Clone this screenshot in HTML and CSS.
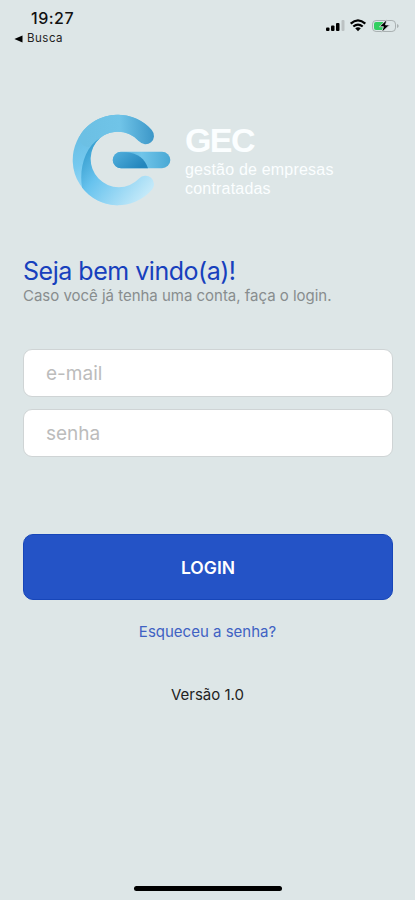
FILE: index.html
```html
<!DOCTYPE html>
<html lang="pt-BR">
<head>
<meta charset="utf-8">
<title>GEC</title>
<link rel="stylesheet" href="styles.css">
</head>
<body>
<div class="screen">
  <header class="status">
    <div class="status-left">
      <span class="clock">19:27</span>
      <span class="back"><svg width="9" height="8" viewBox="0 0 9 8"><path d="M8.500 .5v7L.4 4z"/></svg>Busca</span>
    </div>
    <svg class="status-icons" width="76" height="16" viewBox="0 0 76 16">
      <rect x="0" y="9.500" width="3.500" height="3.500" rx="1"/>
      <rect x="5" y="7.500" width="3.500" height="5.500" rx="1"/>
      <rect x="10" y="5" width="3.500" height="8" rx="1"/>
      <rect x="15.500" y="2" width="3" height="11" rx="1" fill="#bcc2c3"/>
      <g fill="none" stroke="#000" stroke-width="2.2">
        <path d="M24.700 5.600Q32-.8 39.300 5.600"/>
        <path d="M27.300 8.500Q32 4.600 36.700 8.500"/>
      </g>
      <path d="M29.200 10.200Q32 8.100 34.800 10.200L32 13.200z"/>
      <rect x="46.500" y="2.500" width="23" height="11" rx="3.600" fill="none" stroke="#a9b0b1"/>
      <path d="M71 6v4q1.700-.7 1.700-2t-1.700-2z" fill="#a9b0b1"/>
      <path d="M50 4h7v8h-7q-2 0-2-2V6q0-2 2-2z" fill="#33cf60"/>
      <path d="M61 1.400L53.400 8.700h4L55.600 14.500l8-7.600h-4.100z" stroke="#dde6e7" stroke-width=".8"/>
    </svg>
  </header>

  <div class="brand">
    <svg class="mark" width="100" height="92" viewBox="72 114 100 92">
      <defs>
        <linearGradient id="ring" x1="0" y1="0" x2=".35" y2="1">
          <stop offset="0" stop-color="#62b9df"/>
          <stop offset=".5" stop-color="#75c9ef"/>
          <stop offset="1" stop-color="#a9e1fb"/>
        </linearGradient>
        <linearGradient id="top" gradientUnits="userSpaceOnUse" x1="85" y1="140" x2="156" y2="137">
          <stop offset="0" stop-color="#6cc0e4"/>
          <stop offset=".5" stop-color="#70c4e8"/>
          <stop offset="1" stop-color="#3994c6"/>
        </linearGradient>
        <linearGradient id="low" gradientUnits="userSpaceOnUse" x1="90" y1="142" x2="150" y2="190">
          <stop offset="0" stop-color="#359dce"/>
          <stop offset=".35" stop-color="#68c3ee"/>
          <stop offset="1" stop-color="#c3e9f9"/>
        </linearGradient>
        <linearGradient id="bar" x1="0" x2="1">
          <stop offset="0" stop-color="#48a8d6"/>
          <stop offset=".5" stop-color="#70c5ea"/>
          <stop offset="1" stop-color="#49a8d4"/>
        </linearGradient>
        <linearGradient id="leaf" x1="0" y1="0" x2="1" y2=".5">
          <stop offset="0" stop-color="#52afdc"/>
          <stop offset="1" stop-color="#2386bd"/>
        </linearGradient>
      </defs>
      <path d="M145.500 135.800A36.700 36.700 0 1 0 118 196.700" fill="none" stroke="url(#ring)" stroke-width="17"/>
      <path d="M145.500 135.800A36.700 36.700 0 0 0 88 138.400" fill="none" stroke="url(#top)" stroke-width="17" stroke-linecap="round"/>
      <path d="M100 138C85 147 79 168 82 187.500A45.200 45.200 0 0 0 151.900 189.800A8.500 8.500 0 0 0 139.100 178.600A28.200 28.200 0 1 1 100 138z" fill="url(#low)"/>
      <rect x="112.700" y="151.700" width="57.600" height="16.600" rx="8.300" fill="url(#bar)"/>
      <path d="M121 152.300H126C138 153 145 159 148 168.300H121A8 8 0 0 1 121 152.300z" fill="url(#leaf)"/>
    </svg>
    <div class="brand-text">
      <div class="brand-name">GEC</div>
      <div class="brand-sub">gestão de empresas<br>contratadas</div>
    </div>
  </div>

  <main class="form">
    <h1 class="title">Seja bem vindo(a)!</h1>
    <p class="hint">Caso você já tenha uma conta, faça o login.</p>
    <input class="field" type="email" placeholder="e-mail">
    <input class="field" type="password" placeholder="senha">
    <button class="login">LOGIN</button>
    <a class="forgot">Esqueceu a senha?</a>
    <p class="version">Versão 1.0</p>
  </main>
  <div class="home"></div>
</div>
</body>
</html>
```
FILE: styles.css
```css
* { box-sizing: border-box; }
body { margin: 0; background: #dde6e7; font-family: Inter, "Liberation Sans", sans-serif; }
.screen { width: 415px; height: 900px; display: flex; flex-direction: column; overflow: hidden; }
.status { display: flex; justify-content: space-between; height: 114px; padding: 8px 13px 0 14px; }
.status-left { display: flex; flex-direction: column; }
.clock { padding-left: 17px; font-size: 16px; line-height: 20px; font-weight: 500; letter-spacing: .5px; color: #111; }
.back { display: flex; align-items: center; gap: 4px; font-size: 11.5px; line-height: 21px; letter-spacing: .5px; color: #222; }
.status-icons { margin-top: 10px; }
.brand { display: flex; height: 92px; padding-left: 72px; }
.mark { flex: none; }
.brand-text { padding: 7px 0 0 13px; color: #fbfeff; font-family: "Liberation Sans", sans-serif; white-space: nowrap; }
.brand-name { font-size: 34px; line-height: 38px; font-weight: 700; letter-spacing: -1.6px; }
.brand-sub { padding-top: 1px; font-size: 16px; line-height: 19px; letter-spacing: .2px; }
.form { display: flex; flex-direction: column; padding: 0 22px; margin-top: 49px; }
.title { margin: 0; padding-left: 1px; font-size: 25px; line-height: 32px; font-weight: 400; letter-spacing: -.48px; color: #1740bd; }
.hint { margin: 0 0 45px; font-size: 15px; line-height: 17px; letter-spacing: -.02px; color: #888d8e; padding-left: 1px; white-space: nowrap; }
.field { width: 370px; height: 48px; margin: 0 0 12px 1px; padding: 0 22px; border: 1px solid #cfd4d5; border-radius: 9px; background: #fff; font: 400 19px Inter, sans-serif; }
.field::placeholder { color: #bcbcbc; opacity: 1; }
.login { width: 370px; height: 66px; margin: 65px 0 0 1px; padding: 1px 0 0; border: 1px solid #1746b9; border-radius: 10px; background: #2453c6; color: #fff; font: 600 17.5px Inter, sans-serif; }
.forgot { margin-top: 22px; text-align: center; font-size: 15px; line-height: 20px; color: #3f62c3; }
.version { margin: 43px 0 0; text-align: center; font-size: 15px; line-height: 20px; color: #222; }
.home { width: 148px; height: 5px; margin: auto auto 9px 134px; border-radius: 3px; background: #000; }
```
